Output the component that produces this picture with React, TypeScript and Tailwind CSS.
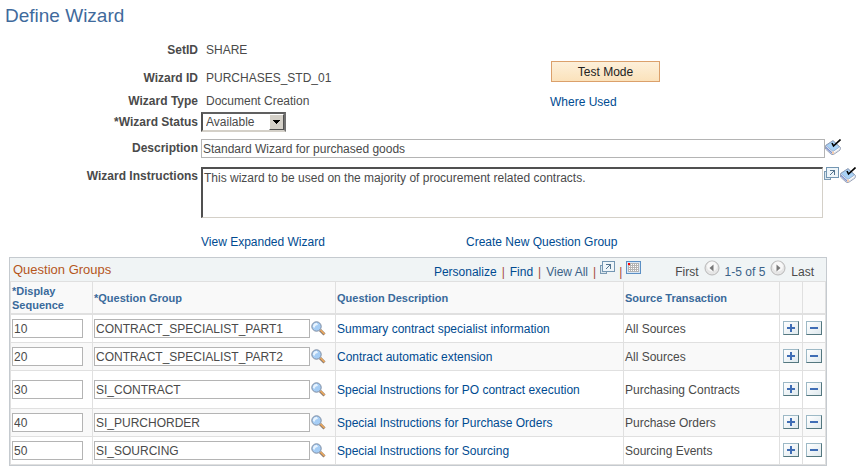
import { useState } from 'react'
import type { ReactNode } from 'react'

const rows = [
  { seq: '10', group: 'CONTRACT_SPECIALIST_PART1', description: 'Summary contract specialist information', source: 'All Sources' },
  { seq: '20', group: 'CONTRACT_SPECIALIST_PART2', description: 'Contract automatic extension', source: 'All Sources' },
  { seq: '30', group: 'SI_CONTRACT', description: 'Special Instructions for PO contract execution', source: 'Purchasing Contracts', tall: true },
  { seq: '40', group: 'SI_PURCHORDER', description: 'Special Instructions for Purchase Orders', source: 'Purchase Orders' },
  { seq: '50', group: 'SI_SOURCING', description: 'Special Instructions for Sourcing', source: 'Sourcing Events' },
]

const inputClass = 'block h-[19px] border border-[#b4b4b4] bg-white px-px text-[#4a4a4a] outline-none'

function SpellCheckIcon() {
  return (
    <svg width="16" height="16" viewBox="0 0 16 16" className="block">
      {/* pages and cover of the book */}
      <path d="M.5 6.500 L8 1.500 L15.500 8.500 L15 11 L8.500 15.500 L6.500 15.500 L.5 10 Z" fill="#fff" stroke="#98a2b6" />
      <path d="M1 6.500 L8 2 L14.500 8 L8 12.500 Z" fill="#a9d2f7" stroke="#7c93b5" strokeWidth=".6" />
      <path d="M1 7.500 L7 13 L7 15 L1 9.500 Z" fill="#7d93cf" />
      <path d="M9 14 L15 10" stroke="#c9ced8" strokeWidth=".6" />
      <path d="M7 12.500h2v2.500h-2z" fill="#f6cdae" />
      <path d="M7 4 L8.500 7 L15.500 .5" fill="none" stroke="#000" strokeWidth="1.600" />
    </svg>
  )
}

function PopupIcon() {
  return (
    <svg width="15" height="14" viewBox="0 0 15 14" className="block" shapeRendering="crispEdges">
      <rect x=".5" y="4.500" width="6" height="8" fill="#dbe7ee" stroke="#7c9bb3" />
      <rect x="2.500" y=".5" width="12" height="10" fill="#eef5f9" stroke="#7396b2" />
      <path d="M6 3.500h5M10.500 3v5" stroke="#54748f" />
      <path d="M10.500 3.500 L6 8" fill="none" stroke="#54748f" shapeRendering="auto" />
    </svg>
  )
}

function GridIcon() {
  return (
    <svg width="15" height="13" viewBox="0 0 15 13" className="block" shapeRendering="crispEdges">
      <rect x=".5" y=".5" width="14" height="12" fill="#d6e6f6" stroke="#5b8fc4" />
      <rect x="2" y="2" width="11" height="9" fill="#b4b4b4" />
      <path d="M3 3h1v1h-1zM5 3h1v1h-1zM7 3h1v1h-1zM9 3h1v1h-1zM11 3h1v1h-1zM3 5h1v1h-1zM5 5h1v1h-1zM7 5h1v1h-1zM9 5h1v1h-1zM11 5h1v1h-1zM3 7h1v1h-1zM5 7h1v1h-1zM7 7h1v1h-1zM9 7h1v1h-1zM11 7h1v1h-1zM3 9h1v1h-1zM5 9h1v1h-1zM7 9h1v1h-1zM9 9h1v1h-1zM11 9h1v1h-1z" fill="#fff" />
      <rect x="2" y="2" width="2" height="2" fill="#f00" />
    </svg>
  )
}

function LookupIcon() {
  return (
    <svg width="15" height="15" viewBox="0 0 15 15" className="block">
      <path d="M9 9 L13.500 13.500" stroke="#8a7a70" strokeWidth="3" />
      <path d="M9.500 9 L13.500 13" stroke="#f0ab5c" strokeWidth="1.600" />
      <circle cx="5.500" cy="5.500" r="4.700" fill="#a5cdf5" stroke="#7d8ba0" />
      <path d="M2 6 A3.500 3.500 0 0 1 6 2 L7 4 Q4 4 3.500 7 Z" fill="#e9f4fe" />
    </svg>
  )
}

function PagerButton({ label, path }: { label: string; path: string }) {
  return (
    <button type="button" aria-label={label} className="mb-2 block">
      <svg width="16" height="16" viewBox="0 0 16 16" className="block">
        <circle cx="8" cy="8" r="7" fill="#e6e6e6" stroke="#b8b8b8" />
        <circle cx="8" cy="6.500" r="5" fill="#f8f8f8" />
        <path d={path} fill="#777" />
      </svg>
    </button>
  )
}

function RowButton({ label, children }: { label: string; children: ReactNode }) {
  return (
    <button
      type="button"
      aria-label={label}
      className="mb-0.5 block border border-t-[#9db9c6] border-r-[#54777f] border-b-[#54777f] border-l-[#9db9c6] bg-linear-to-br from-white to-[#dfe9ee]"
    >
      <svg width="14" height="12" viewBox="0 0 14 12" className="block" fill="#3f6db5" shapeRendering="crispEdges">
        {children}
      </svg>
    </button>
  )
}

function Separator() {
  return <span className="text-[#a5483c]">|</span>
}

function Link({ children }: { children: ReactNode }) {
  return (
    <a href="#" className="text-[#004b91]">
      {children}
    </a>
  )
}

function WizardForm() {
  const [status, setStatus] = useState('Available')
  const label = 'w-[198px] shrink-0 text-right font-bold'

  return (
    <form>
      <div className="flex">
        <div className="w-[550px]">
          <div className="flex h-7 items-center gap-2">
            <span className={label}>SetID</span>
            <span>SHARE</span>
          </div>
          <div className="flex h-7 items-center gap-2">
            <span className={label}>Wizard ID</span>
            <span>PURCHASES_STD_01</span>
          </div>
          <div className="flex h-[18px] items-center gap-2">
            <span className={label}>Wizard Type</span>
            <span>Document Creation</span>
          </div>
          <div className="mt-0.5 flex items-center gap-[3px]">
            <label htmlFor="status" className={label}>*Wizard Status</label>
            <div className="relative">
              <select
                id="status"
                value={status}
                onChange={(e) => setStatus(e.target.value)}
                className="block h-5 w-[85px] appearance-none border-2 border-t-[#606060] border-r-[#707070] border-b-[#d4d0c8] border-l-[#505050] bg-white pl-[3px] outline-none"
              >
                <option>Available</option>
                <option>Inactive</option>
              </select>
              <span className="pointer-events-none absolute top-[2px] right-[2px] flex h-4 w-[15px] items-center justify-center border border-t-white border-r-[#505050] border-b-[#505050] border-l-white bg-[#d4d0c8]">
                <svg width="7" height="4" viewBox="0 0 7 4" shapeRendering="crispEdges">
                  <path d="M0 0h7v1h-1v1h-1v1h-1v1h-1v-1h-1v-1h-1v-1h-1z" />
                </svg>
              </span>
            </div>
          </div>
        </div>
        <div className="flex flex-col items-start pt-[25px]">
          <button
            type="button"
            className="ml-px h-[21px] w-[109px] border border-[#dba06b] bg-linear-to-b from-[#fdf0da] to-[#fbe2bb] text-[#222]"
          >
            Test Mode
          </button>
          <div className="mt-3">
            <Link>Where Used</Link>
          </div>
        </div>
      </div>

      <div className="mt-[7px] flex items-start">
        <label htmlFor="description" className={`${label} mr-[3px] leading-[19px]`}>Description</label>
        <input id="description" defaultValue="Standard Wizard for purchased goods" className={`${inputClass} min-w-0 grow`} />
        <button type="button" aria-label="Spell check description" className="mr-[19px]">
          <SpellCheckIcon />
        </button>
      </div>

      <div className="mt-[9px] flex items-start">
        <label htmlFor="instructions" className={`${label} mr-[3px] leading-[19px]`}>Wizard Instructions</label>
        <textarea
          id="instructions"
          defaultValue="This wizard to be used on the majority of procurement related contracts."
          className="block h-[51px] min-w-0 grow resize-none border border-t-2 border-l-2 border-t-[#505050] border-r-[#d4d0c8] border-b-[#d4d0c8] border-l-[#505050] bg-white p-px outline-none"
        />
        <div className="mr-1 ml-px flex items-start gap-px">
          <button type="button" aria-label="Expand instructions">
            <PopupIcon />
          </button>
          <button type="button" aria-label="Spell check instructions">
            <SpellCheckIcon />
          </button>
        </div>
      </div>

      <div className="mt-4 flex pl-[201px]">
        <div className="w-[265px]">
          <Link>View Expanded Wizard</Link>
        </div>
        <Link>Create New Question Group</Link>
      </div>
    </form>
  )
}

function QuestionGroups() {
  const th = 'border-r border-b-2 border-[#e0e0e0] p-px text-left font-bold'
  const cell = 'border-r border-b border-[#e0e0e0]'
  const td = `${cell} pl-px`
  const buttonCell = `${cell} pl-[3px]`

  return (
    <section className="mt-[7px] mr-[33px] ml-[9px] border border-[#c5cacf]">
      <div className="flex h-6 items-center border-b border-[#e0e0e0] bg-[#f0f4f5] pr-3 pl-[3px]">
        <h2 className="grow text-[13px] text-[#b5561c]">Question Groups</h2>
        <div className="flex items-center gap-[5px] pt-1">
          <Link>Personalize</Link>
          <Separator />
          <Link>Find</Link>
          <Separator />
          <a href="#" className="text-[#3b6288]">View All</a>
        </div>
        <div className="ml-[5px] flex items-center gap-1 pt-1">
          <Separator />
          <button type="button" aria-label="Zoom grid" className="mb-2">
            <PopupIcon />
          </button>
          <Separator />
          <button type="button" aria-label="Download" className="mb-2">
            <GridIcon />
          </button>
        </div>
        <div className="ml-[34px] flex items-center gap-[5px] pt-1">
          <span>First</span>
          <PagerButton label="Previous" path="M9.500 4.500v7L5.500 8z" />
          <span className="text-[#3b6288]">1-5 of 5</span>
          <PagerButton label="Next" path="M6.500 4.500v7L10.500 8z" />
          <span>Last</span>
        </div>
      </div>

      <table className="w-full table-fixed border-separate border-spacing-0 border-l border-[#e0e0e0]">
        <colgroup>
          <col className="w-[82px]" />
          <col className="w-[243px]" />
          <col />
          <col className="w-[156px]" />
          <col className="w-[23px]" />
          <col className="w-[23px]" />
        </colgroup>
        <thead>
          <tr className="h-[33px] bg-[#f9f9f9] text-[11px] leading-[14px] text-[#3a6a9b]">
            <th className={th}>*Display Sequence</th>
            <th className={th}>*Question Group</th>
            <th className={th}>Question Description</th>
            <th className={th}>Source Transaction</th>
            <th className={th} aria-label="Add" />
            <th className={th} aria-label="Delete" />
          </tr>
        </thead>
        <tbody>
          {rows.map((row) => (
            <tr key={row.seq} className={`${row.tall ? 'h-[38px]' : 'h-7'} even:bg-[#f9f9f9]`}>
              <td className={td}>
                <input aria-label="Display Sequence" defaultValue={row.seq} className={`${inputClass} w-[71px]`} />
              </td>
              <td className={td}>
                <div className="flex items-center gap-px">
                  <input aria-label="Question Group" defaultValue={row.group} className={`${inputClass} w-[216px]`} />
                  <button type="button" aria-label="Look up question group">
                    <LookupIcon />
                  </button>
                </div>
              </td>
              <td className={td}>
                <Link>{row.description}</Link>
              </td>
              <td className={td}>{row.source}</td>
              <td className={buttonCell}>
                <RowButton label="Add row">
                  <path d="M3 5h8v2H3z M6 2h2v8H6z" />
                </RowButton>
              </td>
              <td className={buttonCell}>
                <RowButton label="Delete row">
                  <path d="M3 5h8v2H3z" />
                </RowButton>
              </td>
            </tr>
          ))}
        </tbody>
      </table>
    </section>
  )
}

export default function App() {
  return (
    <main className="bg-white font-['Liberation_Sans',Arial,sans-serif] text-[12px] leading-4 text-[#4a4a4a]">
      <h1 className="px-[5px] pt-1.5 pb-2.5 text-[19px] leading-5 text-[#3f6a9c]">Define Wizard</h1>
      <WizardForm />
      <QuestionGroups />
    </main>
  )
}
